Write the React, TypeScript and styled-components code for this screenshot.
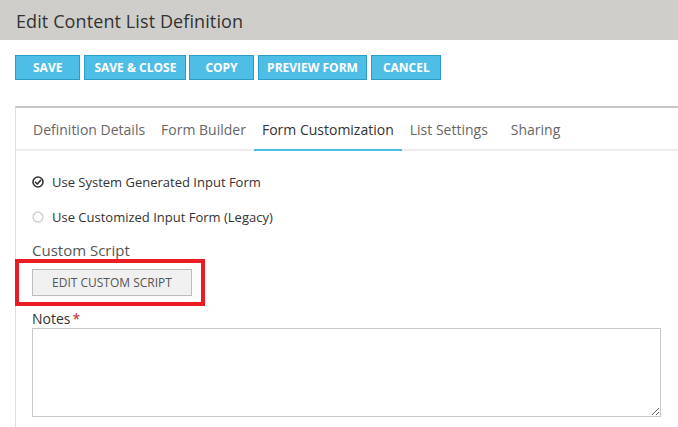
import React, { FC } from 'react';
import styled, { createGlobalStyle } from 'styled-components';

const GlobalStyle = createGlobalStyle`
  html, body {
    margin: 0;
    padding: 0;
    background: #fff;
    font-family: 'Open Sans', 'Noto Sans', sans-serif;
    overflow: hidden;
  }
`;

const Page = styled.div`
  width: 678px;
  height: 427px;
  overflow: hidden;
`;

const Header = styled.div`
  height: 40px;
  background: #cfceca;
  display: flex;
  align-items: center;
  padding-left: 16px;
`;

const Title = styled.h1`
  margin: 2px 0 0;
  font-size: 18px;
  font-weight: 400;
  color: #333;
  letter-spacing: 0.1px;
`;

const Toolbar = styled.div`
  display: flex;
  gap: 4px;
  padding: 15px 0 0 15px;
`;

type TActionButton = { $pad?: number; $tight?: boolean };

const ActionButton = styled.button<TActionButton>`
  height: 25px;
  padding: 0 ${(p) => p.$pad ?? 10}px;
  margin-right: ${(p) => (p.$tight ? -1 : 0)}px;
  background: #4fbee6;
  border: 1px solid #2c9cc7;
  color: #fff;
  font-family: 'Open Sans', sans-serif;
  font-size: 12px;
  font-weight: 700;
  text-transform: uppercase;
  cursor: pointer;
`;

const Panel = styled.div`
  margin: 26px 0 0 15px;
  border-top: 2px solid #c6c6c6;
  border-left: 1px solid #dedede;
  height: 400px;
`;

const Tabs = styled.div`
  display: flex;
  padding-left: 9px;
  border-bottom: 2px solid #ededed;
`;

const Tab = styled.div<{ $active?: boolean; $left?: number }>`
  padding: 12px 8px 9px ${(p) => p.$left ?? 8}px;
  margin-bottom: -2px;
  font-size: 14px;
  line-height: 20px;
  color: ${(p) => (p.$active ? '#333' : '#666')};
  border-bottom: 2px solid ${(p) => (p.$active ? '#4fbee6' : 'transparent')};
`;

const Content = styled.div`
  padding: 20px 0 0 16px;
`;

const RadioRow = styled.label`
  display: flex;
  align-items: center;
  gap: 8px;
  height: 22px;
  font-size: 13px;
  color: #333;
  margin-bottom: 13px;
`;

const SectionTitle = styled.div`
  font-size: 15px;
  color: #555;
  line-height: 20px;
  margin-top: -1px;
`;

// red annotation frame drawn over the button
const Highlight = styled.div`
  position: relative;
  display: inline-block;
  margin-top: 9px;

  &::after {
    content: '';
    position: absolute;
    left: -17px;
    right: -13px;
    top: -10px;
    bottom: -10px;
    border: 4px solid #ec1c24;
    pointer-events: none;
  }
`;

const GrayButton = styled.button`
  width: 160px;
  height: 27px;
  background: #f0f0f0;
  border: 1px solid #bcbcbc;
  color: #555;
  font-family: 'Open Sans', sans-serif;
  font-size: 12px;
  text-transform: uppercase;
  display: block;
`;

const FieldLabel = styled.div`
  margin-top: 14px;
  font-size: 14px;
  color: #333;
  line-height: 18px;
`;

const Required = styled.span`
  color: #c0272d;
  margin-left: 2px;
`;

const NotesArea = styled.textarea`
  display: block;
  margin-top: 0;
  width: 629px;
  height: 89px;
  box-sizing: border-box;
  border: 1px solid #c8c8c8;
  font-family: 'Open Sans', sans-serif;
  resize: both;
  outline: none;
`;

const RadioIcon: FC<{ checked: boolean }> = ({ checked }) =>
  checked ? (
    <svg width="12" height="12" viewBox="0 0 12 12">
      <circle cx="6" cy="6" r="5" fill="none" stroke="#333" strokeWidth="1.6" />
      <polyline
        points="3.5,6.2 5.3,8 8.6,4.4"
        fill="none"
        stroke="#333"
        strokeWidth="1.6"
        strokeLinecap="round"
        strokeLinejoin="round"
      />
    </svg>
  ) : (
    <svg width="12" height="12" viewBox="0 0 12 12">
      <circle cx="6" cy="6" r="5" fill="none" stroke="#cfcfcf" strokeWidth="1.4" />
    </svg>
  );

const actions = [
  { label: 'Save', pad: 17 },
  { label: 'Save & Close', pad: 9, tight: true },
  { label: 'Copy', pad: 15 },
  { label: 'Preview Form', pad: 8.5 },
  { label: 'Cancel', pad: 10.5 },
];

const tabs = [
  { label: 'Definition Details' },
  { label: 'Form Builder' },
  { label: 'Form Customization', active: true },
  { label: 'List Settings' },
  { label: 'Sharing', left: 15 },
];

export default function App() {
  return (
    <Page>
      <GlobalStyle />
      <Header>
        <Title>Edit Content List Definition</Title>
      </Header>
      <Toolbar>
        {actions.map((a) => (
          <ActionButton key={a.label} $pad={a.pad} $tight={a.tight}>
            {a.label}
          </ActionButton>
        ))}
      </Toolbar>
      <Panel>
        <Tabs>
          {tabs.map((t) => (
            <Tab key={t.label} $active={t.active} $left={t.left}>
              {t.label}
            </Tab>
          ))}
        </Tabs>
        <Content>
          <RadioRow>
            <RadioIcon checked />
            Use System Generated Input Form
          </RadioRow>
          <RadioRow>
            <RadioIcon checked={false} />
            Use Customized Input Form (Legacy)
          </RadioRow>
          <SectionTitle>Custom Script</SectionTitle>
          <Highlight>
            <GrayButton>Edit Custom Script</GrayButton>
          </Highlight>
          <FieldLabel>
            Notes<Required>*</Required>
          </FieldLabel>
          <NotesArea />
        </Content>
      </Panel>
    </Page>
  );
}
